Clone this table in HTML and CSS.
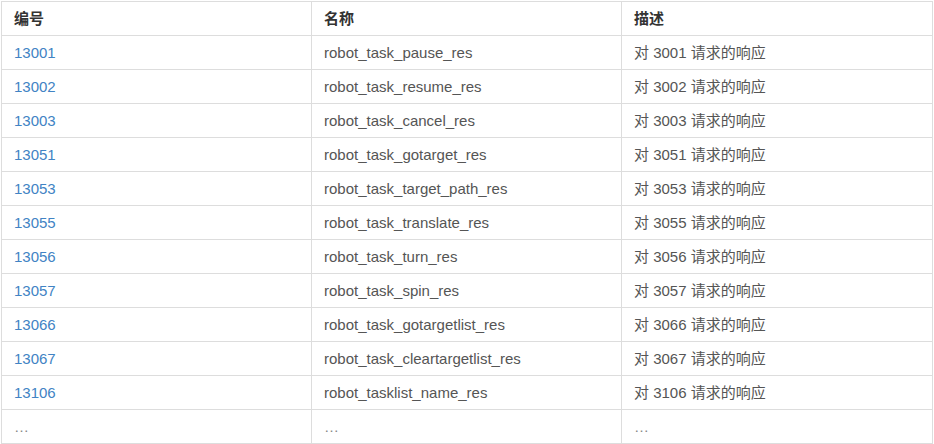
FILE: index.html
```html
<!DOCTYPE html>
<html lang="zh">
<head>
<meta charset="utf-8">
<link rel="stylesheet" href="styles.css">
</head>
<body>
<table class="tbl">
  <colgroup><col class="c1"><col class="c2"><col class="c3"></colgroup>
  <thead>
    <tr><th>编号</th><th>名称</th><th>描述</th></tr>
  </thead>
  <tbody>
    <tr><td><a class="lnk">13001</a></td><td>robot_task_pause_res</td><td>对 3001 请求的响应</td></tr>
    <tr><td><a class="lnk">13002</a></td><td>robot_task_resume_res</td><td>对 3002 请求的响应</td></tr>
    <tr><td><a class="lnk">13003</a></td><td>robot_task_cancel_res</td><td>对 3003 请求的响应</td></tr>
    <tr><td><a class="lnk">13051</a></td><td>robot_task_gotarget_res</td><td>对 3051 请求的响应</td></tr>
    <tr><td><a class="lnk">13053</a></td><td>robot_task_target_path_res</td><td>对 3053 请求的响应</td></tr>
    <tr><td><a class="lnk">13055</a></td><td>robot_task_translate_res</td><td>对 3055 请求的响应</td></tr>
    <tr><td><a class="lnk">13056</a></td><td>robot_task_turn_res</td><td>对 3056 请求的响应</td></tr>
    <tr><td><a class="lnk">13057</a></td><td>robot_task_spin_res</td><td>对 3057 请求的响应</td></tr>
    <tr><td><a class="lnk">13066</a></td><td>robot_task_gotargetlist_res</td><td>对 3066 请求的响应</td></tr>
    <tr><td><a class="lnk">13067</a></td><td>robot_task_cleartargetlist_res</td><td>对 3067 请求的响应</td></tr>
    <tr><td><a class="lnk">13106</a></td><td>robot_tasklist_name_res</td><td>对 3106 请求的响应</td></tr>
    <tr><td class="dots">…</td><td class="dots">…</td><td class="dots">…</td></tr>
  </tbody>
</table>
</body>
</html>
```

FILE: styles.css
```css
html, body {
  margin: 0;
  padding: 0;
  background: #fff;
}
body {
  padding: 1px;
  font-family: "Liberation Sans", "Noto Sans CJK SC", Arial, sans-serif;
  font-size: 15px;
  color: #555;
}
.tbl {
  width: 932px;
  border-collapse: collapse;
  table-layout: fixed;
}
.c1 { width: 310px; }
.c2 { width: 310px; }
.tbl th, .tbl td {
  border: 1px solid #ddd;
  padding: 6px 12px;
  line-height: 21px;
  text-align: left;
  vertical-align: middle;
  white-space: nowrap;
}
.tbl th {
  font-weight: bold;
  color: #333;
}
.lnk {
  color: #4183c4;
  text-decoration: none;
}
.dots {
  color: #888;
}
```
